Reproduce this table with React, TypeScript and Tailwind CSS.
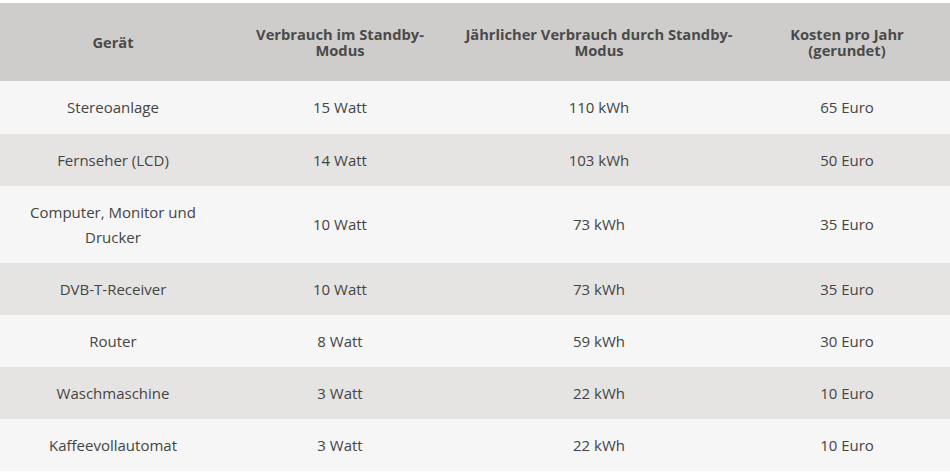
const rows: [React.ReactNode, string, string, string][] = [
  ['Stereoanlage', '15 Watt', '110 kWh', '65 Euro'],
  ['Fernseher (LCD)', '14 Watt', '103 kWh', '50 Euro'],
  [
    <>
      Computer, Monitor und
      <br />
      Drucker
    </>,
    '10 Watt',
    '73 kWh',
    '35 Euro',
  ],
  ['DVB-T-Receiver', '10 Watt', '73 kWh', '35 Euro'],
  ['Router', '8 Watt', '59 kWh', '30 Euro'],
  ['Waschmaschine', '3 Watt', '22 kWh', '10 Euro'],
  ['Kaffeevollautomat', '3 Watt', '22 kWh', '10 Euro'],
];

const cols = 'grid grid-cols-[226px_228px_290px_1fr]';
const heights = ['h-[53px]', 'h-[52px]', 'h-[77px]', 'h-[52px]', 'h-[52px]', 'h-[52px]', 'h-[52px]'];

export default function App() {
  return (
    <div className="h-[476px] w-[950px] bg-white pt-[3px] font-['Open_Sans','Noto_Sans',sans-serif] text-[15px]">
      <div className={`${cols} h-[78px] items-center bg-[#cfcdcb] text-center text-[14.7px] font-bold leading-[16px] text-[#4a4a4a]`}>
        <div>Gerät</div>
        <div>
          Verbrauch im Standby-
          <br />
          Modus
        </div>
        <div>
          Jährlicher Verbrauch durch Standby-
          <br />
          Modus
        </div>
        <div>
          Kosten pro Jahr
          <br />
          (gerundet)
        </div>
      </div>
      {rows.map((row, i) => (
        <div
          key={i}
          className={`${cols} ${heights[i]} items-center text-center leading-[25px] text-[#444444] ${
            i % 2 === 0 ? 'bg-[#f6f6f6]' : 'bg-[#e6e4e3]'
          }`}
        >
          <div>{row[0]}</div>
          <div>{row[1]}</div>
          <div>{row[2]}</div>
          <div>{row[3]}</div>
        </div>
      ))}
    </div>
  );
}
